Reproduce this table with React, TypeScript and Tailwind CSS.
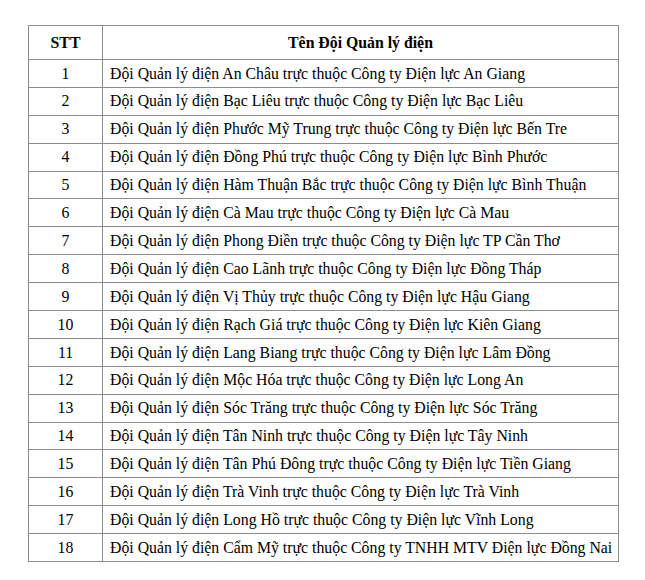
import React from "react";

const rows: string[] = [
  "Đội Quản lý điện An Châu trực thuộc Công ty Điện lực An Giang",
  "Đội Quản lý điện Bạc Liêu trực thuộc Công ty Điện lực Bạc Liêu",
  "Đội Quản lý điện Phước Mỹ Trung trực thuộc Công ty Điện lực Bến Tre",
  "Đội Quản lý điện Đồng Phú trực thuộc Công ty Điện lực Bình Phước",
  "Đội Quản lý điện Hàm Thuận Bắc trực thuộc Công ty Điện lực Bình Thuận",
  "Đội Quản lý điện Cà Mau trực thuộc Công ty Điện lực Cà Mau",
  "Đội Quản lý điện Phong Điền trực thuộc Công ty Điện lực TP Cần Thơ",
  "Đội Quản lý điện Cao Lãnh trực thuộc Công ty Điện lực Đồng Tháp",
  "Đội Quản lý điện Vị Thủy trực thuộc Công ty Điện lực Hậu Giang",
  "Đội Quản lý điện Rạch Giá trực thuộc Công ty Điện lực Kiên Giang",
  "Đội Quản lý điện Lang Biang trực thuộc Công ty Điện lực Lâm Đồng",
  "Đội Quản lý điện Mộc Hóa trực thuộc Công ty Điện lực Long An",
  "Đội Quản lý điện Sóc Trăng trực thuộc Công ty Điện lực Sóc Trăng",
  "Đội Quản lý điện Tân Ninh trực thuộc Công ty Điện lực Tây Ninh",
  "Đội Quản lý điện Tân Phú Đông trực thuộc Công ty Điện lực Tiền Giang",
  "Đội Quản lý điện Trà Vinh trực thuộc Công ty Điện lực Trà Vinh",
  "Đội Quản lý điện Long Hồ trực thuộc Công ty Điện lực Vĩnh Long",
  "Đội Quản lý điện Cẩm Mỹ trực thuộc Công ty TNHH MTV Điện lực Đồng Nai",
];

const App: React.FC = () => {
  return (
    <div className="min-h-[580px] w-[645px] bg-white pt-[25px] pl-[28px] [font-family:'Liberation_Serif',serif] text-[15.8px] text-black">
      <table className="w-[591px] table-fixed border-collapse">
        <thead>
          <tr className="h-[34px]">
            <th className="w-[74px] border border-[#8c8c8c] text-center font-bold">
              STT
            </th>
            <th className="border border-[#8c8c8c] text-center font-bold">
              Tên Đội Quản lý điện
            </th>
          </tr>
        </thead>
        <tbody>
          {rows.map((name, i) => (
            <tr key={i} className="h-[27.9px]">
              <td className="border border-[#8c8c8c] text-center">{i + 1}</td>
              <td className="whitespace-nowrap border border-[#8c8c8c] pl-[7px] text-left">
                {name}
              </td>
            </tr>
          ))}
        </tbody>
      </table>
    </div>
  );
};

export default App;
